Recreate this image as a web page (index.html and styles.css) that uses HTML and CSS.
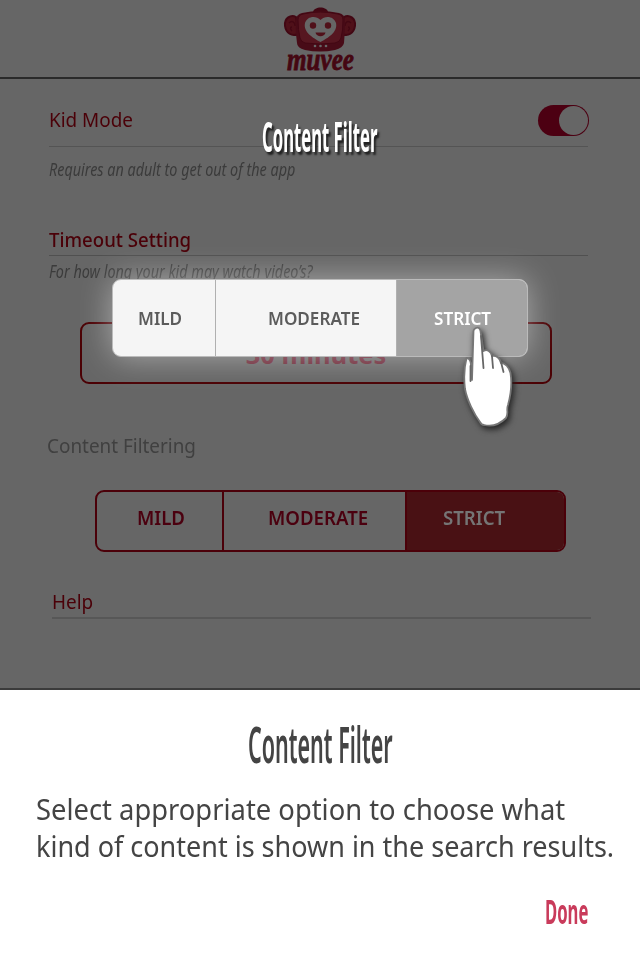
FILE: index.html
```html
<!DOCTYPE html>
<html lang="en">
<head>
<meta charset="utf-8">
<title>muvee settings</title>
<link rel="stylesheet" href="styles.css">
</head>
<body>
<main class="screen">
  <section class="settings">
    <header class="header">
      <svg class="logo" width="80" height="77" viewBox="0 0 80 77" role="img" aria-label="muvee">
        <g fill="#4f1019" stroke="#420713" stroke-width="2">
          <path d="M16 17C11 14 4 18 5 26c1 7 7 11 13 8z"/>
          <path d="M64 17c5-3 12 1 11 9-1 7-7 11-13 8z"/>
        </g>
        <path d="M9 23c3-3 6-1 6 3M12 27c-2 0-2 2 0 4M71 23c-3-3-6-1-6 3M68 27c2 0 2 2 0 4" fill="none" stroke="#420713" stroke-width="1.3"/>
        <path d="M33 12c1-6 14-6 15 0z" fill="#420713"/>
        <path d="M22 13Q40 9 59 13Q65 14 65 21Q65 33 64 43Q63 48 55 50Q40 53 25 50Q17 48 17 43Q15 32 16 21Q16 14 22 13z" fill="#480b17"/>
        <path d="M23 14Q40 10 58 14Q63 15 63 20Q63 31 61 38Q60 42 55 43Q40 45 25 43Q21 42 20 38Q18 30 18 20Q18 15 23 14z" fill="#561620" stroke="#420713"/>
        <path d="M40.500 20C36 15 27 16 25 23c-2 9 8 15 15.500 19C48 38 58 32 56 23c-2-7-11-8-15.500-3z" fill="#666"/>
        <circle cx="33" cy="25.500" r="3.200" fill="#501019"/><circle cx="48" cy="25.500" r="3.200" fill="#501019"/>
        <path d="M35.500 32.500h10c-1 5-9 5-10 0z" fill="#501019"/>
        <g fill="#666"><circle cx="35" cy="46" r="1.300"/><circle cx="40.500" cy="46" r="1.300"/><circle cx="46" cy="46" r="1.300"/></g>
        <text class="wordmark" x="7" y="69.500" textLength="67" lengthAdjust="spacingAndGlyphs">muvee</text>
      </svg>
    </header>

    <div class="row kid-row">
      <h2 class="label"><span class="fit kid">Kid Mode</span></h2>
      <span class="switch"><span class="knob"></span></span>
    </div>
    <p class="hint kid-hint"><span class="fit">Requires an adult to get out of the app</span></p>

    <div class="row time-row"><h2 class="label"><span class="fit timeout">Timeout Setting</span></h2></div>
    <p class="hint time-hint"><span class="fit">For how long your kid may watch video’s?</span></p>
    <div class="time-box"><span class="minutes">30 minutes</span></div>

    <h2 class="label filtering"><span class="fit">Content Filtering</span></h2>
    <div class="segments">
      <span class="segment"><span class="fit">MILD</span></span>
      <span class="segment"><span class="fit">MODERATE</span></span>
      <span class="segment selected"><span class="fit">STRICT</span></span>
    </div>

    <div class="row help-row"><h2 class="label"><span class="fit help">Help</span></h2></div>
  </section>

  <section class="sheet">
    <h1 class="sheet-title"><span class="fit">Content Filter</span></h1>
    <p class="message"><span class="fit">Select appropriate option to choose what</span><br><span class="fit line-b">kind of content is shown in the search results.</span></p>
    <div class="actions"><a class="fit done">Done</a></div>
  </section>

  <div class="coach-title"><span class="fit">Content Filter</span></div>
  <div class="popup">
    <span class="option"><span class="fit">MILD</span></span>
    <span class="option"><span class="fit">MODERATE</span></span>
    <span class="option active"><span class="fit">STRICT</span></span>
  </div>
  <svg class="hand" width="60" height="110" viewBox="0 0 60 110">
    <path d="M17 6C19 5 21 6 21.500 9L24.500 29C28 27 32 29 33 34C37 33 41 36 42 41C46 41 50 45 51.500 51C53 60 52 72 49 83C47 88 50 91 47 96C41 102 33 105 25 103C23 103 22 102 21 100C15 92 8 78 6 67C5 59 5 46 7.500 36C10 36 12 39 12 44L13 58L14.500 9C14.500 8 15 7 17 6z" fill="#fff" stroke="#777" stroke-width="1.800" stroke-linejoin="round"/>
    <path d="M11.500 44L11.500 59M22 14L24.500 46M33 34L34 46M42 40L44.500 50" fill="none" stroke="#666" stroke-width="1.800" stroke-linecap="round"/>
  </svg>
</main>
</body>
</html>
```
FILE: styles.css
```css
* { box-sizing: border-box; }
body { margin: 0; background: #fff; font-family: "Noto Sans", "Open Sans", sans-serif; }
h1, h2, p { margin: 0; font-weight: 400; }
.screen { position: relative; width: 640px; height: 960px; overflow: hidden; }
.fit { display: inline-block; white-space: nowrap; transform-origin: 0 50%; }

.settings { height: 690px; background: #666; border-bottom: 2px solid #3b3b3b; }
.header { display: flex; justify-content: center; height: 79px; border-bottom: 2px solid #2a2a2a; }
.logo { display: block; overflow: visible; }
.wordmark { font: italic 700 31px "Liberation Serif", serif; fill: #450712; stroke: #450712; stroke-width: .8px; }

.row { display: flex; justify-content: space-between; width: 539px; margin-left: 49px; border-bottom: 1px solid #545454; }
.label { font-size: 20px; line-height: 26px; color: #4b0008; }
.label .fit { transform: scaleX(.945); }
.kid-row { height: 68px; padding-top: 27px; }
.kid-row .label { line-height: 27px; }
.time-row { height: 29px; margin-top: 46px; border-bottom-color: #505050; }
.label .timeout { font-weight: 500; transform: scaleX(.93); }
.switch { width: 51px; height: 31px; margin: -1px -1px 0 0; padding: 1px; border-radius: 16px; background: #4c0012; display: flex; justify-content: flex-end; }
.knob { width: 29px; height: 29px; border-radius: 50%; background: #666; }
.hint { margin-left: 49px; height: 24px; font-size: 18.5px; line-height: 24px; font-style: italic; color: #3b3b3b; }
.kid-hint { margin-top: 10px; }
.hint .fit { transform: scaleX(.777); }
.time-hint { margin-top: 3px; }
.time-box { width: 472px; height: 62px; margin: 39px 0 0 80px; border: 2px solid #4b0004; border-radius: 9px; display: flex; justify-content: center; }
.minutes { font-size: 25.5px; line-height: 60px; font-weight: 700; color: #6b2635; }
.filtering { height: 24px; margin: 49px 0 0 47px; color: #404040; }
.segments { display: grid; grid-template-columns: 125px 183px 1fr; width: 471px; height: 62px; margin: 33px 0 0 95px; border: 2px solid #4b0009; border-radius: 9px; overflow: hidden; background: #666; }
.segment { padding-left: 40px; font-size: 19px; line-height: 53px; font-weight: 600; color: #4b000f; }
.segment .fit { transform: scaleX(.98); }
.segment + .segment { border-left: 2px solid #4b0009; padding-left: 44px; }
.segment.selected { padding-left: 36px; background: #491114; color: #757575; }
.help-row { height: 30px; margin: 37px 0 0 52px; border-bottom: 2px solid #575757; }

.sheet { height: 270px; padding-top: 23px; color: #444; }
.sheet-title { height: 60px; padding-left: 248px; font-size: 51px; line-height: 60px; font-weight: 600; }
.sheet-title .fit { transform: scaleX(.422); }
.message { margin: 18px 0 0 36px; font-size: 28.5px; line-height: 37px; height: 74px; white-space: nowrap; }
.message .fit { transform: scaleX(.96); }
.message .line-b { transform: scaleX(.947); }
.actions { margin: 26px 0 0 545px; width: 60px; height: 40px; font-size: 34px; line-height: 40px; font-weight: 700; color: #c93b5b; }
.done { transform: scaleX(.49); }

.coach-title { position: absolute; left: 262px; top: 111px; font-size: 41px; line-height: 50px; font-weight: 700; color: #fff; }
.coach-title .fit { transform: scaleX(.407); text-shadow: 5px 3px 3px #222; }
.popup { position: absolute; left: 112px; top: 279px; width: 416px; height: 78px; display: grid; grid-template-columns: 102px 181px 1fr; border: 1px solid #bbb; border-radius: 9px; overflow: hidden; background: #f5f5f5; box-shadow: 0 0 32px rgba(255,255,255,.45); }
.option { padding-left: 25px; font-size: 18px; line-height: 76px; font-weight: 600; color: #5b5b5b; }
.option .fit { transform: scaleX(.95); }
.option + .option { border-left: 1px solid #b0b0b0; padding-left: 52px; }
.option.active { padding-left: 37px; background: #a4a4a4; color: #fff; }
.hand { position: absolute; left: 459px; top: 322px; filter: drop-shadow(2px 3px 3px #222); }
```
